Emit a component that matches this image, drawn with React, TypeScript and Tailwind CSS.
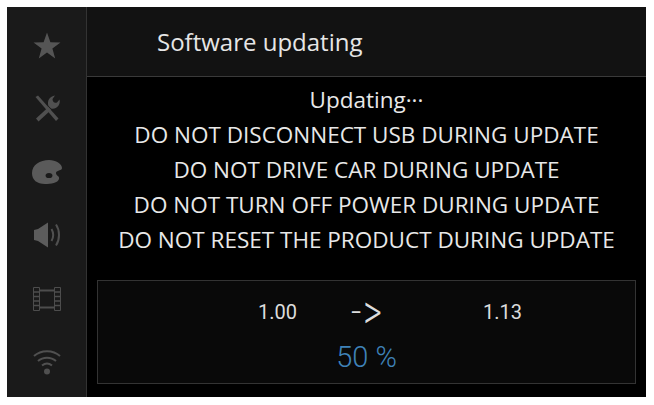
const font = "font-['Open_Sans','Noto_Sans',sans-serif]";

function Star() {
  return (
    <svg width="28" height="28" viewBox="0 0 28 28">
      <path d="M14 0.5 L17.4 10.2 L27.5 10.4 L19.4 16.6 L22.2 26.5 L14 20.6 L5.8 26.5 L8.6 16.6 L0.5 10.4 L10.6 10.2 Z" fill="#555" />
    </svg>
  );
}
function Tools() {
  return (
    <svg width="28" height="30" viewBox="0 0 28 30">
      <path d="M2.5 3 L5 1.5 L25.5 24.5 L23 27 Z" fill="#505050" />
      <path d="M15.5 13 L3 24.5 L5.5 27.5 L18 16 Z" fill="#505050" />
      <path d="M15.5 12 C13.5 7 17 2 22 1.5 L19.5 5 C19.5 8 21.5 9.5 24 8.5 L26.5 5.5 C28 11 23 16 18 14.5 Z" fill="#505050" />
    </svg>
  );
}
function Palette() {
  return (
    <svg width="32" height="26" viewBox="0 0 32 26">
      <path d="M1 14 C1 6 9 1 18 1 C25 1 31 5 31 9 C31 12 25 11 25 14 C25 17 29 17 28 20 C27 24 20 25 14 25 C6 25 1 21 1 14 Z" fill="#5a5a5a" />
      <ellipse cx="18" cy="16.5" rx="3.4" ry="2.6" fill="#1a1a1a" />
    </svg>
  );
}
function Speaker() {
  return (
    <svg width="28" height="28" viewBox="0 0 28 28">
      <path d="M1 9 L5 8 L15 1.5 L15 26.5 L5 20 L1 19 Z" fill="#5c5c5c" />
      <path d="M18.5 8 C20.5 11.5 20.5 16.5 18.5 20" fill="none" stroke="#505050" strokeWidth="2" />
      <path d="M23 3.5 C27 9.5 27 18.5 23 24.5" fill="none" stroke="#505050" strokeWidth="2" />
    </svg>
  );
}
function Film() {
  return (
    <svg width="28" height="24" viewBox="0 0 28 24" fill="none" stroke="#4d4d4d">
      <path d="M0.5 0.5 H6.5 V23.5 H0.5 Z M21.5 0.5 H27.5 V23.5 H21.5 Z" strokeWidth="1" />
      <path d="M6.5 3.5 H21.5 M6.5 20.5 H21.5" strokeWidth="2" />
      <path d="M0.5 5 H6.5 M0.5 9.5 H6.5 M0.5 14 H6.5 M0.5 18.5 H6.5 M21.5 5 H27.5 M21.5 9.5 H27.5 M21.5 14 H27.5 M21.5 18.5 H27.5" strokeWidth="1.6" />
    </svg>
  );
}
function Wifi() {
  return (
    <svg width="28" height="26" viewBox="0 0 28 26" fill="none" stroke="#505050" strokeWidth="2">
      <path d="M1 7 C8 0.5 20 0.5 27 7" />
      <path d="M5 12 C10 7.5 18 7.5 23 12" />
      <path d="M9 16.5 C12 14 16 14 19 16.5" />
      <circle cx="14" cy="22.5" r="3" fill="#505050" stroke="none" />
    </svg>
  );
}

const icons = [
  { el: <Star />, cls: "h-[63px]" },
  { el: <Tools />, cls: "h-[63px]" },
  { el: <Palette />, cls: "h-[63px]" },
  { el: <Speaker />, cls: "h-[64px]" },
  { el: <Film />, cls: "h-[63px]" },
  { el: <Wifi />, cls: "h-[63px]" },
];

const lines = [
  "Updating\u00b7\u00b7\u00b7",
  "DO NOT DISCONNECT USB DURING UPDATE",
  "DO NOT DRIVE CAR DURING UPDATE",
  "DO NOT TURN OFF POWER DURING UPDATE",
  "DO NOT RESET THE PRODUCT DURING UPDATE",
];

export default function App() {
  return (
    <div className="w-[654px] h-[405px] bg-white p-[7px] pb-[8px] pr-[8px]">
      <div className="w-full h-full flex bg-black overflow-hidden">
        <div className="w-[80px] shrink-0 bg-[#1a1a1a] border-r border-[#333] flex flex-col pt-[7px]">
          {icons.map((ic, i) => (
            <div key={i} className={`${ic.cls} flex items-center justify-center`}>{ic.el}</div>
          ))}
        </div>
        <div className="flex-1 flex flex-col">
          <div className={`h-[70px] shrink-0 bg-[#121212] border-b border-[#3a3a3a] pl-[70px] pt-[16px] text-[24px] leading-[38px] text-[#e6e6e6] ${font}`}>
            Software updating
          </div>
          <div className={`h-[176px] pt-[5px] text-center text-[#e8e8e8] text-[22.5px] leading-[35px] ${font}`}>
            {lines.map((l) => (
              <div key={l} className="whitespace-nowrap">{l}</div>
            ))}
          </div>
          <div className="ml-[10px] mt-[27px] w-[539px] h-[104px] bg-[#090909] border border-[#333] font-['Roboto',sans-serif] flex flex-col">
            <div className="relative h-[60px] text-[#dcdcdc]">
              <span className="absolute left-[160px] top-[16px] text-[20px] leading-[30px]">1.00</span>
              <span className="absolute left-[253px] top-[11px] text-[36px] leading-[40px] font-light whitespace-nowrap">-<span className="inline-block ml-[2px] scale-y-[1.4] origin-center">&gt;</span></span>
              <span className="absolute left-[385px] top-[16px] text-[20px] leading-[30px]">1.13</span>
            </div>
            <div className="text-center text-[#3f82b8] text-[29px] leading-[34px] -mt-[1px] font-light">50 %</div>
          </div>
        </div>
      </div>
    </div>
  );
}
